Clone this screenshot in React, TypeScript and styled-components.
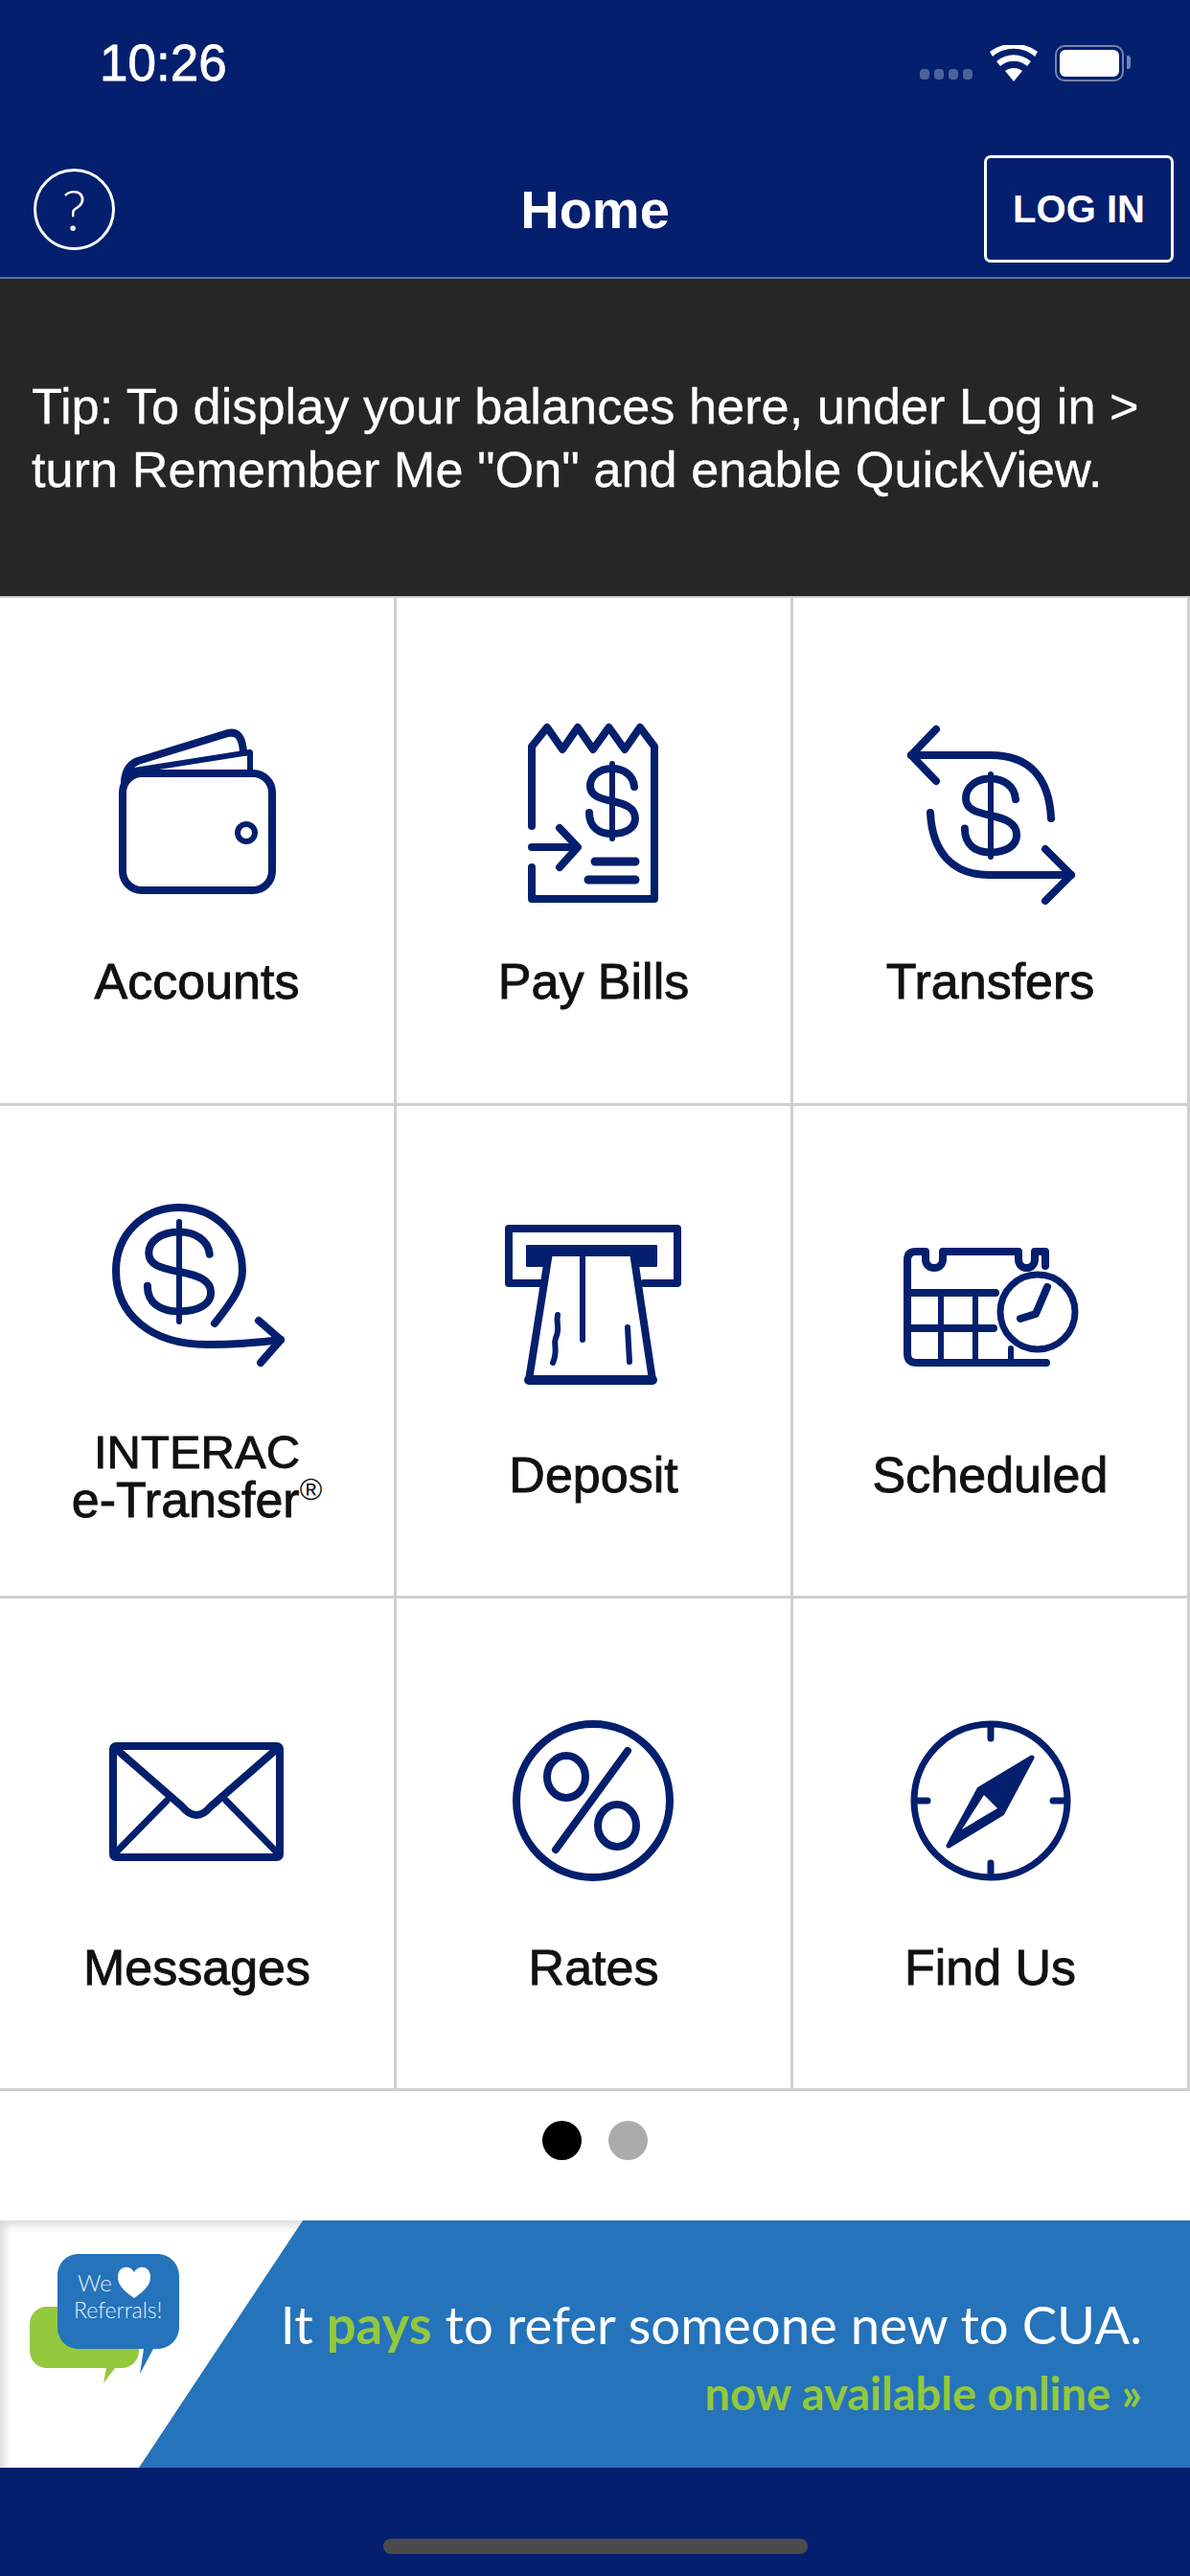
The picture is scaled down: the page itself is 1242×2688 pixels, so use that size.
import React from "react";
import styled, { createGlobalStyle } from "styled-components";

const NAVY = "#041f6d";
const BLUE = "#2573ba";
const GREEN = "#94c83d";

const GlobalStyle = createGlobalStyle`
  html, body {
    margin: 0;
    padding: 0;
    background: #ffffff;
  }
  body {
    font-family: "Liberation Sans", Arial, sans-serif;
  }
`;

const DollarSign = ({ x, y, sx, sy, bar }: { x: number; y: number; sx: number; sy: number; bar: number }) => (
  <g transform={`translate(${x} ${y})`}>
    <path
      transform={`scale(${sx} ${sy})`}
      vectorEffect="non-scaling-stroke"
      d="M23 -15C22 -27 12 -34 0 -34C-14 -34 -23 -26 -23 -16C-23 -6 -14 -3 0 0C14 3 24 7 24 18C24 28 14 34 0 34C-14 34 -24 27 -24 12"
    />
    <path d={`M0 ${-bar}V${bar}`} strokeWidth="6" />
  </g>
);

const WalletIcon = () => (
  <IconSvg viewBox="0 0 200 200">
    <rect x="22" y="58" width="156" height="122" rx="20" />
    <path d="M24 66C25 54 30 48 38 45L132 16C142 14 147 20 148 36" />
    <path d="M28 56L155 36V58" strokeWidth="6" />
    <circle cx="151" cy="120" r="9" strokeWidth="6" />
  </IconSvg>
);

const PayBillsIcon = () => (
  <IconSvg viewBox="0 0 200 200">
    <path d="M35 113V30L51 10L67 33L83 10L99 33L115.500 10L132 33L148 10L163 30V189H35V156" />
    <path d="M35 135H82" />
    <path d="M64 115L83 135L64 156" />
    <DollarSign x={119} y={87} sx={1} sy={1} bar={39} />
    <path d="M101 150H143M94 169H143" strokeWidth="9" />
  </IconSvg>
);

const TransfersIcon = () => (
  <IconSvg viewBox="0 0 200 200">
    <path d="M43 12L17 39L43 66" />
    <path d="M17 39H100C140 39 161 62 163 105" />
    <path d="M37 99C39 140 60 164 98 164H184" />
    <path d="M157 137L184 164L157 191" />
    <DollarSign x={100} y={102} sx={1.13} sy={1.13} bar={43} />
  </IconSvg>
);

const InteracIcon = () => (
  <IconSvg viewBox="0 0 200 200">
    <path d="M118 117C138 92 147 78 147 62C147 24 118 -4 81 -4C44 -4 15 24 15 62C15 108 52 139 110 139C140 139 165 137 187 134" />
    <path d="M164 114L187 134L166 158" />
    <DollarSign x={81} y={63} sx={1.38} sy={1.22} bar={52} />
  </IconSvg>
);

const DepositIcon = () => (
  <IconSvg viewBox="0 0 200 200">
    <path d="M46 75H11V18H187V75H152" />
    <path d="M30 36H165V57H30Z" fill={NAVY} strokeWidth="2" />
    <polygon points="53,43 141,43 161,176 32,176" fill="#fff" />
    <path d="M32 176H161" strokeWidth="10" />
    <path d="M88 44V134" strokeWidth="6" />
    <path d="M135 121L137 157" strokeWidth="6" />
    <path d="M62 108C60 118 65 122 60 132C57 140 63 144 57 158" strokeWidth="6" />
  </IconSvg>
);

const ScheduledIcon = () => (
  <IconSvg viewBox="0 0 200 200">
    <path d="M157 57V42H146V50C146 62 129 62 129 50V42H50V50C50 62 32 62 32 50V42H22C16 42 13 45 13 51V148C13 155 16 158 23 158H158" />
    <path d="M13 85H105M13 122H103" />
    <path d="M48 85V158M84 85V158M121 143V158" strokeWidth="6" />
    <circle cx="149" cy="105" r="39" fill="#fff" strokeWidth="7" />
    <path d="M159 79L147 107L131 112" />
  </IconSvg>
);

const MessagesIcon = () => (
  <IconSvg viewBox="0 0 200 200">
    <rect x="12" y="44" width="174" height="116" rx="3" />
    <path d="M14 46L84 107Q99 125 114 107L184 46" />
    <path d="M14 156L68 101M184 156L130 101" strokeWidth="7" />
  </IconSvg>
);

const RatesIcon = () => (
  <IconSvg viewBox="0 0 200 200">
    <circle cx="99" cy="101" r="80" />
    <path d="M135 49L60 152" />
    <ellipse cx="71" cy="76" rx="20" ry="22" />
    <ellipse cx="124" cy="127" rx="20" ry="22" />
  </IconSvg>
);

const FindUsIcon = () => (
  <IconSvg viewBox="0 0 200 200">
    <circle cx="100" cy="101" r="80" strokeWidth="7" />
    <path d="M100 24V36M100 166V178M23 101H34M165 101H177" strokeWidth="7" />
    <polygon points="143,56 88,89 56,148 112,114" fill={NAVY} strokeWidth="5" />
    <polygon points="93,95 107,109 70,131" fill="#fff" stroke="none" />
  </IconSvg>
);

const App = () => {
  const tiles = [
    { label: "Accounts", icon: <WalletIcon /> },
    { label: "Pay Bills", icon: <PayBillsIcon /> },
    { label: "Transfers", icon: <TransfersIcon /> },
    {
      label: (
        <span>
          <Brand>INTERAC</Brand>
          <br />
          e-Transfer<Reg>®</Reg>
        </span>
      ),
      icon: <InteracIcon />,
    },
    { label: "Deposit", icon: <DepositIcon /> },
    { label: "Scheduled", icon: <ScheduledIcon /> },
    { label: "Messages", icon: <MessagesIcon /> },
    { label: "Rates", icon: <RatesIcon /> },
    { label: "Find Us", icon: <FindUsIcon /> },
  ];

  return (
    <Page>
      <GlobalStyle />
      <StatusBar>
        <Time>10:26</Time>
        <StatusIcons>
          <SignalDots>
            <i />
            <i />
            <i />
            <i />
          </SignalDots>
          <svg width="50" height="38" viewBox="0 0 50 38">
            <path d="M25 38L16 27C21 23 29 23 34 27Z" fill="#fff" />
            <path d="M11 21C19 14 31 14 39 21L43 16C32 7 18 7 7 16Z" fill="#fff" transform="translate(0 1)" />
            <path d="M3 12C15 1 35 1 47 12L50 7C36 -4 14 -4 0 7Z" fill="#fff" />
          </svg>
          <Battery>
            <BatteryFill />
            <BatteryCap />
          </Battery>
        </StatusIcons>
      </StatusBar>
      <NavBar>
        <HelpButton>?</HelpButton>
        <Title>Home</Title>
        <LoginButton>LOG IN</LoginButton>
      </NavBar>
      <TipBar>
        Tip: To display your balances here, under Log in &gt;
        <br />
        turn Remember Me "On" and enable QuickView.
      </TipBar>
      <TileGrid>
        {tiles.map((tile, i) => (
          <Tile key={i} $first={i < 3}>
            {tile.icon}
            <TileLabel>{tile.label}</TileLabel>
          </Tile>
        ))}
      </TileGrid>
      <Pager>
        <Dot $active />
        <Dot />
      </Pager>
      <Promo>
        <PromoWedge />
        <PromoLogo viewBox="0 0 170 175" width="170" height="175">
          <path d="M18 90H96C106 90 114 98 114 108V136C114 146 106 154 96 154H89L77 170L80 154H18C8 154 0 146 0 136V108C0 98 8 90 18 90Z" fill={GREEN} />
          <path d="M51 35H133C146 35 156 45 156 58V111C156 124 146 134 133 134H129L115 160L119 134H51C38 134 29 124 29 111V58C29 45 38 35 51 35Z" fill={BLUE} />
          <path d="M109 81C96 72 92 66 92 59C92 47 105 46 109 54C113 46 126 47 126 59C126 66 122 72 109 81Z" fill="#fff" />
          <LogoText x="50" y="74" fontSize="24">We</LogoText>
          <LogoText x="46" y="102" fontSize="23">Referrals!</LogoText>
        </PromoLogo>
        <PromoCopy>
          <PromoHeadline>
            It <em>pays</em> to refer someone new to CUA.
          </PromoHeadline>
          <PromoLink>now available online »</PromoLink>
        </PromoCopy>
      </Promo>
      <BottomBar>
        <HomeIndicator />
      </BottomBar>
    </Page>
  );
};

export default App;

const Page = styled.div`
  display: flex;
  flex-direction: column;
  width: 1242px;
  height: 2688px;
  overflow: hidden;
  background: #ffffff;
`;

const StatusBar = styled.div`
  display: flex;
  justify-content: space-between;
  align-items: flex-start;
  height: 132px;
  padding: 36px 69px 0 104px;
  box-sizing: border-box;
  background: ${NAVY};
`;

const Time = styled.div`
  color: #ffffff;
  font-size: 53px;
  line-height: 60px;
  -webkit-text-stroke: 0.8px #ffffff;
`;

const StatusIcons = styled.div`
  display: flex;
  align-items: flex-start;
  margin-top: 11px;
`;

const SignalDots = styled.div`
  display: flex;
  gap: 5px;
  margin: 25px 18px 0 0;

  i {
    display: block;
    width: 10px;
    height: 11px;
    border-radius: 4px;
    background: rgba(255, 255, 255, 0.3);
  }
`;

const Battery = styled.div`
  position: relative;
  width: 72px;
  height: 38px;
  margin-left: 18px;
  padding: 3px;
  box-sizing: border-box;
  border: 2px solid rgba(255, 255, 255, 0.45);
  border-radius: 10px;
`;

const BatteryFill = styled.div`
  width: 100%;
  height: 100%;
  border-radius: 6px;
  background: #ffffff;
`;

const BatteryCap = styled.div`
  position: absolute;
  top: 9px;
  right: -9px;
  width: 4px;
  height: 14px;
  border-radius: 0 3px 3px 0;
  background: rgba(255, 255, 255, 0.45);
`;

const NavBar = styled.div`
  display: grid;
  grid-template-columns: 1fr auto 1fr;
  align-items: center;
  height: 159px;
  padding: 30px 17px 17px;
  box-sizing: border-box;
  border-bottom: 2px solid #5d7396;
  background: ${NAVY};
`;

const HelpButton = styled.div`
  display: flex;
  justify-content: center;
  align-items: center;
  width: 85px;
  height: 85px;
  margin-left: 18px;
  box-sizing: border-box;
  border: 3px solid #ffffff;
  border-radius: 50%;
  color: #ffffff;
  font-family: Lato, sans-serif;
  font-size: 60px;
  font-weight: 300;
`;

const Title = styled.div`
  color: #ffffff;
  font-size: 56px;
  font-weight: 700;
`;

const LoginButton = styled.div`
  display: flex;
  justify-content: center;
  align-items: center;
  justify-self: end;
  width: 198px;
  height: 112px;
  box-sizing: border-box;
  border: 3px solid #ffffff;
  border-radius: 7px;
  color: #ffffff;
  font-size: 40px;
  font-weight: 700;
`;

const TipBar = styled.div`
  height: 331px;
  padding: 100px 0 0 33px;
  box-sizing: border-box;
  background: #262626;
  color: #ffffff;
  font-size: 52.300px;
  line-height: 66px;
  -webkit-text-stroke: 0.3px #ffffff;
`;

const TileGrid = styled.div`
  display: grid;
  grid-template-columns: repeat(3, 414px);
  border-top: 2px solid #cfcfcf;
`;

const Tile = styled.div<{ $first?: boolean }>`
  display: flex;
  flex-direction: column;
  align-items: center;
  height: ${(p) => (p.$first ? 530 : 514)}px;
  padding-top: ${(p) => (p.$first ? 125 : 110)}px;
  box-sizing: border-box;
  border-right: 3px solid #cfcfcf;
  border-bottom: 3px solid #cfcfcf;
`;

const IconSvg = styled.svg`
  flex: none;
  width: 200px;
  height: 200px;
  overflow: visible;
  fill: none;
  stroke: ${NAVY};
  stroke-width: 8;
  stroke-linecap: round;
  stroke-linejoin: round;
`;

const TileLabel = styled.div`
  display: flex;
  align-items: center;
  justify-content: center;
  height: 100px;
  margin-top: 25px;
  color: #111111;
  font-size: 52px;
  line-height: 50px;
  text-align: center;
  -webkit-text-stroke: 0.9px #111111;
`;

const Brand = styled.span`
  font-size: 49px;
`;

const Reg = styled.sup`
  font-size: 32px;
  line-height: 0;
  -webkit-text-stroke: 0;
`;

const Pager = styled.div`
  display: flex;
  justify-content: center;
  gap: 28px;
  height: 135px;
  padding-top: 31px;
  box-sizing: border-box;
`;

const Dot = styled.div<{ $active?: boolean }>`
  width: 41px;
  height: 41px;
  border-radius: 50%;
  background: ${(p) => (p.$active ? "#000000" : "#ababab")};
`;

const Promo = styled.div`
  position: relative;
  display: flex;
  justify-content: space-between;
  height: 258px;
  background: ${BLUE};
`;

const PromoWedge = styled.div`
  position: absolute;
  inset: 0 auto 0 0;
  width: 316px;
  background: #ffffff;
  box-shadow: inset 5px 5px 8px rgba(0, 0, 0, 0.14);
  clip-path: polygon(0 0, 100% 0, 145px 100%, 0 100%);
`;

const PromoLogo = styled.svg`
  position: relative;
  flex: none;
  margin-left: 31px;
`;

const LogoText = styled.text`
  fill: #e3eff9;
  font-family: Lato, sans-serif;
  font-weight: 300;
`;

const PromoCopy = styled.div`
  position: relative;
  display: flex;
  flex-direction: column;
  align-items: flex-end;
  padding: 74px 50px 0 0;
`;

const PromoHeadline = styled.div`
  color: #ffffff;
  font-family: Lato, sans-serif;
  font-size: 54.500px;
  line-height: 68px;

  em {
    color: ${GREEN};
    font-style: normal;
    font-weight: 700;
  }
`;

const PromoLink = styled.div`
  margin-top: 10px;
  color: ${GREEN};
  font-family: Lato, sans-serif;
  font-size: 47px;
  font-weight: 700;
  line-height: 56px;
`;

const BottomBar = styled.div`
  display: flex;
  justify-content: center;
  flex: 1;
  padding-top: 74px;
  box-sizing: border-box;
  background: ${NAVY};
`;

const HomeIndicator = styled.div`
  width: 443px;
  height: 16px;
  border-radius: 8px;
  background: #4b4b4b;
`;
